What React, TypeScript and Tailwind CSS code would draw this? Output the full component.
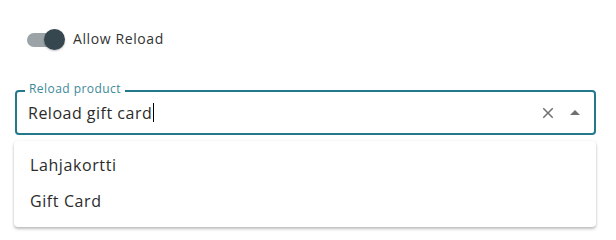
import React from "react";

export default function App() {
  return (
    <div className="w-[616px] h-[240px] bg-white font-['Open_Sans',sans-serif] text-[rgba(0,0,0,0.87)]">
      <div className="pt-[29px] pl-[27px] flex items-center h-[50px]">
        <div className="relative w-[37px] h-[21px] flex items-center">
          <div className="w-[34px] h-[14px] rounded-full bg-[#9ba3a7]" />
          <div className="absolute left-[17px] top-0 w-[21px] h-[21px] rounded-full bg-[#36474f] shadow-[0_1px_2px_rgba(0,0,0,0.25)]" />
        </div>
        <span className="ml-[9px] mt-[-2px] text-[14px] leading-[20px] tracking-[0.6px] text-[#333]">Allow Reload</span>
      </div>

      <div className="relative mt-[40px] ml-[15px] w-[581px]">
        <div className="h-[45px] border-2 border-[#23798a] rounded-[4px] flex items-center pl-[11px] pr-[7px]">
          <span className="text-[16px] leading-[22px] tracking-[0.5px] text-[#2b2b2b]">Reload gift card</span>
          <span className="ml-[1px] w-px h-[19px] bg-black" />
          <div className="flex-1" />
          <svg width="18" height="18" viewBox="0 0 24 24" className="mr-[6px]">
            <path
              fill="#707070"
              d="M19 6.41 17.59 5 12 10.59 6.41 5 5 6.41 10.59 12 5 17.59 6.41 19 12 13.41 17.59 19 19 17.59 13.41 12z"
            />
          </svg>
          <svg width="24" height="24" viewBox="0 0 24 24">
            <path fill="#707070" d="m7 14 5-5 5 5z" />
          </svg>
        </div>
        <span className="absolute left-[10px] top-[-8px] px-[4px] bg-white text-[12px] leading-[14px] tracking-[0.45px] text-[#3c8a99]">
          Reload product
        </span>
        <div className="absolute left-[-1px] top-[51px] w-[582px] bg-white rounded-[4px] shadow-[0_2px_3px_rgba(0,0,0,0.25),0_0_2px_rgba(0,0,0,0.08)] pt-[6px] pb-[8px]">
          <div className="h-[36px] flex items-center pl-[16px] text-[16px] tracking-[0.6px] text-[#2b2b2b]">Lahjakortti</div>
          <div className="h-[36px] flex items-center pl-[16px] text-[16px] tracking-[0.6px] text-[#2b2b2b]">Gift Card</div>
        </div>
      </div>
    </div>
  );
}
